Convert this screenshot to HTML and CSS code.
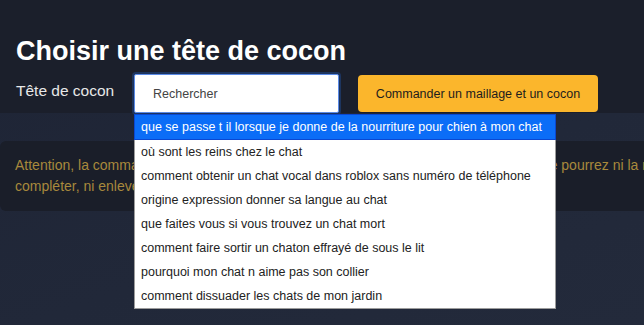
FILE: index.html
```html
<!DOCTYPE html>
<html lang="fr">
<head>
<meta charset="utf-8">
<title>Choisir une tête de cocon</title>
<link rel="stylesheet" href="styles.css">
</head>
<body>
<div class="page">
  <header class="header">
    <h1 class="title">Choisir une tête de cocon</h1>
    <div class="row">
      <label class="label" for="search">Tête de cocon</label>
      <div class="combo">
        <input id="search" class="input" type="text" placeholder="Rechercher">
        <ul class="options">
          <li class="option active">que se passe t il lorsque je donne de la nourriture pour chien à mon chat</li>
          <li class="option">où sont les reins chez le chat</li>
          <li class="option">comment obtenir un chat vocal dans roblox sans numéro de téléphone</li>
          <li class="option">origine expression donner sa langue au chat</li>
          <li class="option">que faites vous si vous trouvez un chat mort</li>
          <li class="option">comment faire sortir un chaton effrayé de sous le lit</li>
          <li class="option">pourquoi mon chat n aime pas son collier</li>
          <li class="option">comment dissuader les chats de mon jardin</li>
        </ul>
      </div>
      <button class="button" type="button">Commander un maillage et un cocon</button>
    </div>
  </header>
  <main class="main">
    <div class="alert">Attention, la commande de maillage et de cocon est définitive : une fois validée vous ne pourrez ni la modifier, ni la compléter, ni enlever des éléments.</div>
  </main>
</div>
</body>
</html>
```

FILE: styles.css
```css
html, body {
  margin: 0;
  padding: 0;
  height: 100%;
}

body {
  font-family: "Liberation Sans", Arial, sans-serif;
  background: linear-gradient(160deg, #1e2435 0%, #212839 60%, #232a3b 100%);
  color: #e6e6e6;
  overflow: hidden;
}

.page {
  overflow: hidden;
  min-height: 100%;
}

.header {
  background: #1b1f2b;
  padding: 35px 16px 0;
  height: 113px;
  box-sizing: border-box;
  position: relative;
  z-index: 2;
}

.title {
  margin: 0;
  font-size: 27px;
  line-height: 32px;
  font-weight: bold;
  color: #ffffff;
}

.row {
  display: flex;
  align-items: center;
  margin-top: 7px;
  height: 39px;
}

.label {
  font-size: 15.5px;
  color: #e8e8e8;
  width: 118px;
  margin-bottom: 5px;
}

.combo {
  position: relative;
  width: 205px;
  height: 39px;
}

.input {
  box-sizing: border-box;
  width: 205px;
  height: 39px;
  margin: 0;
  border: 1px solid #5a8ae6;
  border-radius: 2px;
  box-shadow: 0 0 0 2px #1d355f;
  background: #ffffff;
  padding: 0 10px 0 18px;
  font-family: "Liberation Sans", Arial, sans-serif;
  font-size: 12.5px;
  color: #222;
  outline: none;
}

.input::placeholder {
  color: #444444;
}

.options {
  position: absolute;
  top: 40px;
  left: 0;
  width: 422px;
  box-sizing: border-box;
  margin: 0;
  padding: 0;
  list-style: none;
  background: #ffffff;
  border: 1px solid #9c9c9c;
  border-top: none;
  z-index: 5;
}

.option {
  height: 24px;
  line-height: 24px;
  padding: 0 6px;
  font-size: 12.5px;
  color: #222222;
  white-space: nowrap;
}

.option.active {
  height: 24px;
  margin: 0 -1px;
  border: 1px solid #0a48d2;
  background: #0b6df7;
  color: #ffffff;
}

.button {
  margin-left: 19px;
  width: 240px;
  height: 37px;
  border: none;
  border-radius: 4px;
  background: #fbb62c;
  color: #1d1d1d;
  font-family: "Liberation Sans", Arial, sans-serif;
  font-size: 12.5px;
  padding: 0;
}

.main {
  padding-top: 28px;
}

.alert {
  width: 770px;
  box-sizing: border-box;
  background: #1a1e29;
  border-radius: 6px;
  padding: 14px 15px;
  font-size: 14px;
  line-height: 21px;
  color: #a8893c;
}
```
